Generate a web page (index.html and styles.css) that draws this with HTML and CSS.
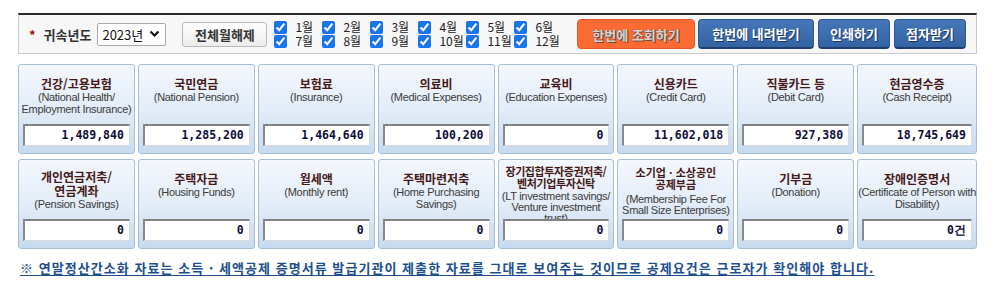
FILE: index.html
```html
<!DOCTYPE html>
<html lang="ko">
<head>
<meta charset="utf-8">
<title>연말정산간소화</title>
<link rel="stylesheet" href="styles.css">
</head>
<body>
<div class="page">
  <div class="toolbar">
    <span class="req">*</span>
    <span class="toolbar-label">귀속년도</span>
    <div class="select">
      <span>2023년</span>
      <svg class="chev" width="11" height="8" viewBox="0 0 11 8"><path d="M1.5 1.5 L5.5 5.5 L9.5 1.5" fill="none" stroke="#111" stroke-width="2.2"/></svg>
    </div>
    <button class="btn-plain">전체월해제</button>
    <div class="months">
      <label class="month"><input type="checkbox" checked><span>1월</span></label>
      <label class="month"><input type="checkbox" checked><span>2월</span></label>
      <label class="month"><input type="checkbox" checked><span>3월</span></label>
      <label class="month"><input type="checkbox" checked><span>4월</span></label>
      <label class="month"><input type="checkbox" checked><span>5월</span></label>
      <label class="month"><input type="checkbox" checked><span>6월</span></label>
      <label class="month"><input type="checkbox" checked><span>7월</span></label>
      <label class="month"><input type="checkbox" checked><span>8월</span></label>
      <label class="month"><input type="checkbox" checked><span>9월</span></label>
      <label class="month"><input type="checkbox" checked><span>10월</span></label>
      <label class="month"><input type="checkbox" checked><span>11월</span></label>
      <label class="month"><input type="checkbox" checked><span>12월</span></label>
    </div>
    <div class="actions">
      <button class="btn btn-orange">한번에 조회하기</button>
      <button class="btn btn-blue">한번에 내려받기</button>
      <button class="btn btn-blue">인쇄하기</button>
      <button class="btn btn-blue">점자받기</button>
    </div>
  </div>

  <div class="cards">
    <div class="card">
      <div class="card-head"><div class="ko">건강/고용보험</div><div class="en">(National Health/<br>Employment Insurance)</div></div>
      <div class="val">1,489,840</div>
    </div>
    <div class="card">
      <div class="card-head"><div class="ko">국민연금</div><div class="en">(National Pension)</div></div>
      <div class="val">1,285,200</div>
    </div>
    <div class="card">
      <div class="card-head"><div class="ko">보험료</div><div class="en">(Insurance)</div></div>
      <div class="val">1,464,640</div>
    </div>
    <div class="card">
      <div class="card-head"><div class="ko">의료비</div><div class="en">(Medical Expenses)</div></div>
      <div class="val">100,200</div>
    </div>
    <div class="card">
      <div class="card-head"><div class="ko">교육비</div><div class="en">(Education Expenses)</div></div>
      <div class="val">0</div>
    </div>
    <div class="card">
      <div class="card-head"><div class="ko">신용카드</div><div class="en">(Credit Card)</div></div>
      <div class="val">11,602,018</div>
    </div>
    <div class="card">
      <div class="card-head"><div class="ko">직불카드 등</div><div class="en">(Debit Card)</div></div>
      <div class="val">927,380</div>
    </div>
    <div class="card">
      <div class="card-head"><div class="ko">현금영수증</div><div class="en">(Cash Receipt)</div></div>
      <div class="val">18,745,649</div>
    </div>

    <div class="card">
      <div class="card-head card-head--two"><div class="ko">개인연금저축/<br>연금계좌</div><div class="en">(Pension Savings)</div></div>
      <div class="val">0</div>
    </div>
    <div class="card">
      <div class="card-head"><div class="ko">주택자금</div><div class="en">(Housing Funds)</div></div>
      <div class="val">0</div>
    </div>
    <div class="card">
      <div class="card-head"><div class="ko">월세액</div><div class="en">(Monthly rent)</div></div>
      <div class="val">0</div>
    </div>
    <div class="card">
      <div class="card-head"><div class="ko">주택마련저축</div><div class="en">(Home Purchasing<br>Savings)</div></div>
      <div class="val">0</div>
    </div>
    <div class="card">
      <div class="card-head card-head--dense"><div class="ko">장기집합투자증권저축/<br>벤처기업투자신탁</div><div class="en">(LT investment savings/<br>Venture investment<br>trust)</div></div>
      <div class="val">0</div>
    </div>
    <div class="card">
      <div class="card-head card-head--dense card-head--gap"><div class="ko">소기업 · 소상공인<br>공제부금</div><div class="en">(Membership Fee For<br>Small Size Enterprises)</div></div>
      <div class="val">0</div>
    </div>
    <div class="card">
      <div class="card-head"><div class="ko">기부금</div><div class="en">(Donation)</div></div>
      <div class="val">0</div>
    </div>
    <div class="card">
      <div class="card-head"><div class="ko">장애인증명서</div><div class="en">(Certificate of Person with<br>Disability)</div></div>
      <div class="val">0건</div>
    </div>
  </div>

  <p class="note">※ 연말정산간소화 자료는 소득 · 세액공제 증명서류 발급기관이 제출한 자료를 그대로 보여주는 것이므로 공제요건은 근로자가 확인해야 합니다.</p>
</div>
</body>
</html>
```

FILE: styles.css
```css
* { box-sizing: border-box; }

body {
  margin: 0;
  background: #ffffff;
  font-family: "Noto Sans CJK KR", "Liberation Sans", sans-serif;
  color: #222;
}

.page {
  width: 977px;
  padding: 13px 0 0 18px;
}

/* toolbar */
.toolbar {
  display: flex;
  align-items: center;
  height: 41px;
  padding: 0 10px;
  background: #f7f7f7;
  border: 1px solid #c9c9c9;
  border-top: 2px solid #2a2a2a;
}

.req {
  color: #a01010;
  font-weight: bold;
  font-size: 13px;
  margin-right: 8px;
  line-height: 1;
}

.toolbar-label {
  font-size: 13px;
  font-weight: bold;
  color: #333;
  margin-right: 6px;
}

.select {
  display: flex;
  align-items: center;
  justify-content: space-between;
  width: 69px;
  height: 23px;
  padding: 0 5px 0 4px;
  border: 1px solid #a9a9a9;
  border-radius: 2px;
  background: #fff;
  font-size: 13px;
  color: #111;
  margin-right: 16px;
}

.btn-plain {
  width: 85px;
  height: 25px;
  padding: 0;
  font-family: inherit;
  font-size: 13px;
  font-weight: bold;
  color: #333;
  background: linear-gradient(#ffffff, #ececec);
  border: 1px solid #b9b9b9;
  border-radius: 3px;
  margin-right: 7px;
}

.months {
  display: grid;
  grid-template-columns: repeat(6, 48px);
  grid-template-rows: 14px 14px;
}

.month {
  display: flex;
  align-items: center;
  font-size: 12px;
  line-height: 14px;
  color: #222;
  white-space: nowrap;
}

.month input {
  width: 13px;
  height: 13px;
  margin: 0 8px 0 0;
  accent-color: #1a73e8;
}

.actions {
  display: flex;
  gap: 3px;
  margin-left: auto;
}

.btn {
  height: 30px;
  padding: 0;
  font-family: inherit;
  font-size: 13px;
  font-weight: bold;
  border-radius: 4px;
  white-space: nowrap;
}

.btn-orange {
  width: 118px;
  background: #fb6a32;
  border: 1px solid #e95a24;
  color: #d9d4d2;
  text-shadow: 1px 1px 0 #6e4a3c, 0 0 1px #5a3a30;
}

.btn-blue {
  background: linear-gradient(#4577b8, #3463a2);
  border: 1px solid #2c5790;
  border-bottom: 2px solid #1d3e6e;
  color: #ffffff;
  text-shadow: 1px 1px 0 #1c3560;
}

.btn-blue:nth-child(2) { width: 116px; }
.btn-blue:nth-child(3),
.btn-blue:nth-child(4) { width: 72px; margin-left: 1px; }

/* cards */
.cards {
  display: grid;
  grid-template-columns: repeat(8, 1fr);
  grid-auto-rows: 90px;
  column-gap: 3px;
  row-gap: 5px;
  margin-top: 10px;
}

.card {
  display: flex;
  flex-direction: column;
  border: 1px solid #a7bed9;
  border-radius: 3px;
  background: linear-gradient(#f4f7fc 0%, #e3ecf7 50%, #c6daef 100%);
  text-align: center;
}

.card-head {
  flex: 1;
  min-height: 0;
  padding-top: 11px;
}

.ko {
  font-size: 12px;
  font-weight: bold;
  line-height: 15px;
  color: #451818;
  white-space: nowrap;
}

.en {
  font-family: "Liberation Sans", Arial, sans-serif;
  font-size: 11px;
  line-height: 12px;
  letter-spacing: -0.3px;
  color: #3a3a3a;
  white-space: nowrap;
}

.card-head--two { padding-top: 10px; }
.card-head--two .ko { line-height: 14px; }

.card-head--dense { padding-top: 5px; }
.card-head--dense .ko { font-size: 11px; line-height: 12px; letter-spacing: -0.4px; }
.card-head--dense .en { line-height: 11px; margin-top: 2px; }
.card-head--gap { padding-top: 6px; }
.card-head--gap .ko { letter-spacing: 0; }
.card-head--gap .en { margin-top: 4px; }

.val {
  height: 22px;
  margin: 0 4px 7px;
  padding-right: 5px;
  background: #fff;
  border-top: 2px solid #808080;
  border-left: 2px solid #8a8a8a;
  border-right: 1px solid #dadada;
  border-bottom: 1px solid #dadada;
  font-family: "DejaVu Sans Mono", monospace;
  font-size: 11.5px;
  font-weight: bold;
  line-height: 19px;
  text-align: right;
  color: #0d0d3a;
  position: relative;
}

.note {
  margin: 11px 0 0 2px;
  font-size: 13px;
  font-weight: bold;
  line-height: 16px;
  letter-spacing: 1.05px;
  color: #1d4f8d;
  text-decoration: underline;
  text-underline-offset: 2px;
  white-space: nowrap;
}
```
